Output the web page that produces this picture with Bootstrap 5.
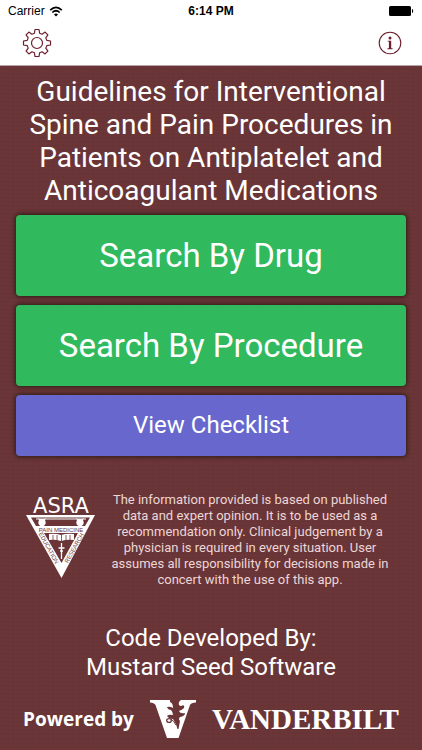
<!DOCTYPE html>
<html lang="en">
<head>
<meta charset="utf-8">
<meta name="viewport" content="width=device-width, initial-scale=1">
<title>Interventional Pain Guidelines</title>
<link rel="stylesheet" href="https://cdn.jsdelivr.net/npm/bootstrap@5.3.0/dist/css/bootstrap.min.css">
<style>
  body {
    font-family: Roboto, sans-serif;
    background-color: #6b3538;
    background-image:
      repeating-linear-gradient(0deg, rgba(0,0,0,.04) 0 1px, transparent 1px 4px),
      repeating-linear-gradient(90deg, rgba(90,70,50,.08) 0 2px, transparent 2px 5px);
  }
  .topbar { border-bottom: 1px solid #b5a5a6; height: 66px; }
  .status { font-family: "Liberation Sans", Arial, sans-serif; font-size: 12px; line-height: 22px; color: #000; }
  .side { flex: 1 0 0; }
  .icon-btn { color: #6b1f2a; line-height: 0; }
  .title { font-size: 28px; line-height: 33px; padding-top: 9px; }
  .tiles { gap: 9px; }
  .tile { color: #fff; border-radius: 4px; border: 0; box-shadow: 0 0 4px 1px rgba(25,20,10,.75); }
  .tile:hover { color: #fff; filter: brightness(1.05); }
  .tile-lg { background: #30b95d; font-size: 33px; line-height: 81px; }
  .tile-sm { background: #6767cd; font-size: 24px; line-height: 61px; }
  .about { padding-top: 20px; }
  .note { font-size: 13px; line-height: 16px; color: #ecd6d7; }
  .credit { font-size: 24px; line-height: 29px; margin-bottom: 18px; }
  .powered { font-family: "Open Sans", sans-serif; font-weight: 700; font-size: 19px; line-height: 38px; }
  .brand { font-family: "Liberation Serif", serif; font-weight: 700; font-size: 29px; line-height: 38px; }
</style>
<script src="https://cdn.jsdelivr.net/npm/bootstrap@5.3.0/dist/js/bootstrap.bundle.min.js"></script>
</head>
<body class="text-white">
<header class="topbar bg-white">
  <div class="status d-flex px-2">
    <div class="side d-flex align-items-center">Carrier
      <svg class="ms-1" width="14" height="11" viewBox="0 0 14 11" fill="none" stroke="#000" stroke-width="1.7" aria-hidden="true">
        <path d="M1.2 4.1Q7-1.5 12.8 4.1M3.3 6.5Q7 3 10.7 6.5"/>
        <path d="M5 8.4Q7 6.6 9 8.4L7 10.4Z" fill="#000" stroke="none"/>
      </svg>
    </div>
    <div class="fw-bold">6:14 PM</div>
    <div class="side d-flex align-items-center justify-content-end">
      <svg width="25" height="10" viewBox="0 0 25 10" role="img" aria-label="Battery full"><rect width="22" height="10" rx="1.5"/><path d="M23 3h.5q1.5 2 0 4H23z"/></svg>
    </div>
  </div>
  <div class="d-flex justify-content-between align-items-center px-3">
    <button type="button" class="icon-btn btn p-0 ms-1" aria-label="Settings">
      <svg width="32" height="40" viewBox="-16 -20 32 40" fill="none" stroke="currentColor" stroke-width="1.2" stroke-linejoin="round">
        <circle r="5.5"/>
        <path d="M-2-13.5H2L2.6-9.8 5.1-8.8 8.1-10.9 10.9-8.1 8.8-5.1 9.8-2.6 13.5-2V2L9.8 2.6 8.8 5.1 10.9 8.1 8.1 10.9 5.1 8.8 2.6 9.8 2 13.5H-2L-2.6 9.8-5.1 8.8-8.1 10.9-10.9 8.1-8.8 5.1-9.8 2.6-13.5 2V-2L-9.8-2.6-8.8-5.1-10.9-8.1-8.1-10.9-5.1-8.8-2.6-9.8Z"/>
      </svg>
    </button>
    <button type="button" class="icon-btn btn p-0" aria-label="Information">
      <svg width="32" height="40" viewBox="-17 -20 32 40" fill="none" stroke="currentColor">
        <circle r="10.8" stroke-width="1.1"/>
        <g fill="currentColor" stroke="none"><circle cy="-4.9" r="1.5"/><path d="M-2.4-2.3H1.2V5.3H2.6V6.2H-2.6V5.3H-1.1V-1.4H-2.4Z"/></g>
      </svg>
    </button>
  </div>
</header>

<main class="px-3">
  <h1 class="title text-center fw-normal mb-2">Guidelines for Interventional<br>Spine and Pain Procedures in<br>Patients on Antiplatelet and<br>Anticoagulant Medications</h1>
  <div class="tiles d-grid">
    <button type="button" class="btn tile tile-lg p-0">Search By Drug</button>
    <button type="button" class="btn tile tile-lg p-0">Search By Procedure</button>
    <button type="button" class="btn tile tile-sm p-0">View Checklist</button>
  </div>
  <section class="about d-flex align-items-center mt-3">
    <svg class="ms-2 flex-shrink-0" width="74" height="94" viewBox="24 492 74 94" role="img" aria-label="ASRA Pain Medicine, Education, Research">
      <text x="61" y="512" text-anchor="middle" font-family="DejaVu Sans" font-size="21" fill="#fff">ASRA</text>
      <path fill="#fff" d="M26 514H95L61.500 577Z"/>
      <path fill="#6b3538" d="M31 516.500H90L85 525H36Z"/>
      <path fill="#fff" d="M36 517.500h50v1H36zM38 517q4 2 8 0l-1 2q2 4-1.500 6h-3q-3.500-2-1.500-6zM76 517q4 2 8 0l-1 2q2 4-1.500 6h-3q-3.500-2-1.500-6z"/>
      <path fill="#6b3538" d="M44 532H78L61.500 562Z"/>
      <path fill="#fff" d="M49 533q6-1 12 1 6-2 13-1v6q-7-1-13 1-6-2-12-1z"/>
      <path d="M53 534v5M57 534v5M61.500 534v6M66 534v5M70 534v5" stroke="#6b3538" stroke-width=".8"/>
      <path d="M61.500 542v16M58.500 547h6M60 550h3" stroke="#fff" stroke-width="1.300"/>
      <g font-family="Liberation Sans" text-anchor="middle" fill="#6b3538">
        <text x="61" y="531" font-size="6">PAIN MEDICINE</text>
        <text transform="translate(47 548) rotate(61)" font-size="6">EDUCATION</text>
        <text transform="translate(76 548) rotate(-61)" font-size="6">RESEARCH</text>
      </g>
    </svg>
    <p class="note text-center flex-grow-1 mb-0 me-1">The information provided is based on published<br>data and expert opinion. It is to be used as a<br>recommendation only. Clinical judgement by a<br>physician is required in every situation. User<br>assumes all responsibility for decisions made in<br>concert with the use of this app.</p>
  </section>
</main>

<footer class="pt-4">
  <p class="credit text-center mt-2 pt-1">Code Developed By:<br>Mustard Seed Software</p>
  <div class="d-flex justify-content-center align-items-center gap-3">
    <span class="powered">Powered by</span>
    <svg width="46" height="38" viewBox="150 700 46 38" role="img" aria-label="Vanderbilt V and oak leaf">
      <path fill="#fff" d="M150 700H196V702.500Q191 702.500 190 705L178.500 738H167L155.500 705Q154 702.500 150 702.500Z"/>
      <path fill="#6b3538" d="M170 700H181Q178 702 179 705Q181 707 183 705Q185 706 184 708Q182 710 179 711Q180 714 185 713Q185 716 180 717Q178 719 180 721L178.500 729H177.500Q176 723 173 719Q169 719 167 716Q169 714 173 715Q173 712 171 710Q168 710 167 707Q170 706 173 708Q173 703 170 702Z"/>
      <ellipse cx="169" cy="720.500" rx="2.300" ry="1.900" fill="none" stroke="#6b3538" stroke-width="1.300"/>
      <path d="M171 719Q174 721 176 725" fill="none" stroke="#6b3538"/>
    </svg>
    <span class="brand">VANDERBILT</span>
  </div>
</footer>
</body>
</html>
